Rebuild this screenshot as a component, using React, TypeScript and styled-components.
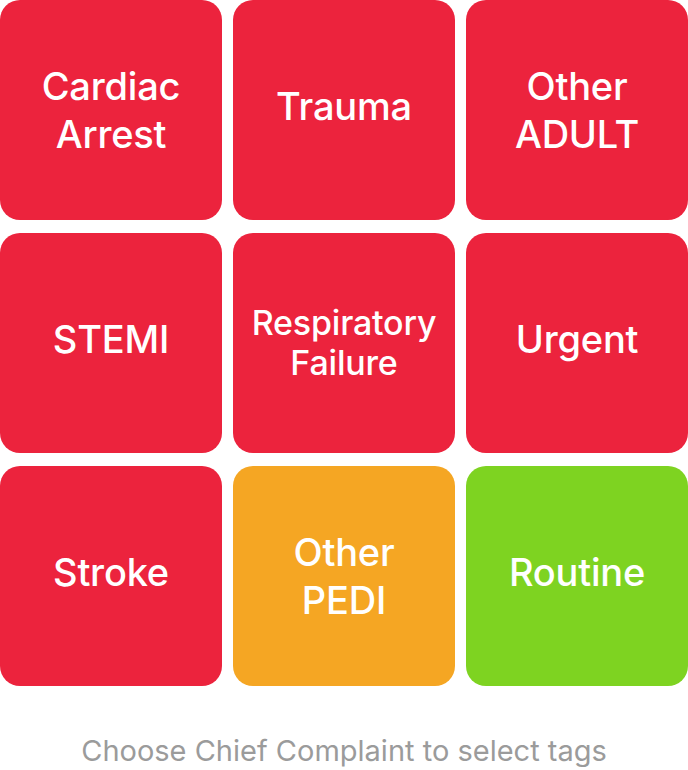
import styled, { createGlobalStyle } from "styled-components";

type Tone = "red" | "orange" | "green";

const tones: Record<Tone, string> = {
  red: "#ec233d",
  orange: "#f5a623",
  green: "#7ed321",
};

const tags: { label: string[]; tone: Tone; small?: boolean }[] = [
  { label: ["Cardiac", "Arrest"], tone: "red" },
  { label: ["Trauma"], tone: "red" },
  { label: ["Other", "ADULT"], tone: "red" },
  { label: ["STEMI"], tone: "red" },
  { label: ["Respiratory", "Failure"], tone: "red", small: true },
  { label: ["Urgent"], tone: "red" },
  { label: ["Stroke"], tone: "red" },
  { label: ["Other", "PEDI"], tone: "orange" },
  { label: ["Routine"], tone: "green" },
];

export default function App() {
  return (
    <>
      <GlobalStyle />
      <Page>
        <Grid>
          {tags.map((t) => (
            <Tile
              key={t.label.join(" ")}
              $tone={t.tone}
              $small={t.small}
              $single={t.label.length === 1}
            >
              {t.label.map((line) => (
                <span key={line}>{line}</span>
              ))}
            </Tile>
          ))}
        </Grid>
        <Caption>Choose Chief Complaint to select tags</Caption>
      </Page>
    </>
  );
}

const GlobalStyle = createGlobalStyle`
  body {
    margin: 0;
    background: #ffffff;
    font-family: Inter, "Noto Sans", sans-serif;
  }
`;

const Page = styled.div`
  width: 688px;
  display: flex;
  flex-direction: column;
`;

const Grid = styled.div`
  display: grid;
  grid-template-columns: repeat(3, 222px);
  grid-auto-rows: 220px;
  column-gap: 11px;
  row-gap: 13px;
`;

const Tile = styled.button<{ $tone: Tone; $small?: boolean; $single: boolean }>`
  border: none;
  border-radius: 20px;
  background-color: ${(p) => tones[p.$tone]};
  color: #ffffff;
  display: flex;
  flex-direction: column;
  align-items: center;
  justify-content: center;
  font-family: Inter, "Noto Sans", sans-serif;
  font-size: ${(p) => (p.$small ? "34px" : "38px")};
  line-height: ${(p) => (p.$small ? "40px" : "48px")};
  font-weight: 500;
  letter-spacing: -0.2px;
  padding: 0 0 ${(p) => (p.$single ? "8px" : "0")};
  cursor: pointer;
`;

const Caption = styled.div`
  margin-top: 49px;
  text-align: center;
  color: #9b9b9b;
  font-size: 29px;
  line-height: 32px;
`;
